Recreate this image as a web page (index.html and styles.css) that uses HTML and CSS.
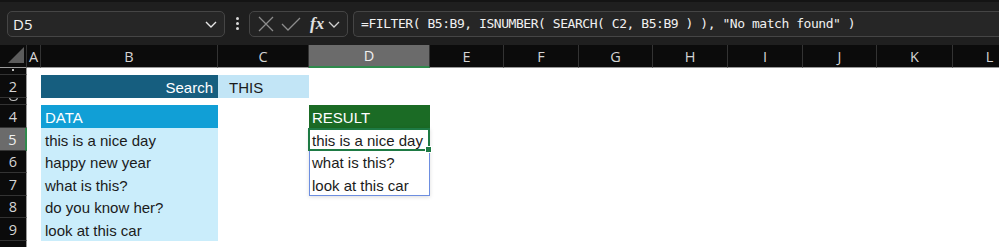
FILE: index.html
```html
<!DOCTYPE html>
<html lang="en">
<head>
    <meta charset="UTF-8">
    <title>FILTER search</title>
    <link rel="stylesheet" href="styles.css">
</head>
<body>
    <div class="toolbar">
        <div class="namebox">
            <span>D5</span>
            <svg class="chev" width="14" height="10" viewBox="0 0 14 10"><path d="M2 3 L7 8 L12 3" fill="none" stroke="#e6e6e6" stroke-width="1.4"/></svg>
        </div>
        <div class="dots"><i></i><i></i><i></i></div>
        <div class="fxbox">
            <svg width="20" height="20" viewBox="0 0 20 20"><path d="M3 3 L17 17 M17 3 L3 17" stroke="#8c8c8c" stroke-width="1.3" fill="none"/></svg>
            <svg width="22" height="20" viewBox="0 0 22 20"><path d="M2 10 L8 16 L20 4" stroke="#8c8c8c" stroke-width="1.3" fill="none"/></svg>
            <span class="fx">fx</span>
            <svg width="12" height="10" viewBox="0 0 12 10"><path d="M1 3 L6 8 L11 3" fill="none" stroke="#d0d0d0" stroke-width="1.3"/></svg>
        </div>
        <div class="formula">=FILTER( B5:B9, ISNUMBER( SEARCH( C2, B5:B9 ) ), "No match found" )</div>
    </div>

    <div class="sheet">
        <div class="hd corner"><svg width="16" height="16" viewBox="0 0 16 16"><path d="M16 0 L16 16 L0 16 Z" fill="#5c5c5c"/></svg></div>
        <div class="hd">A</div>
        <div class="hd">B</div>
        <div class="hd">C</div>
        <div class="hd sel">D</div>
        <div class="hd">E</div>
        <div class="hd">F</div>
        <div class="hd">G</div>
        <div class="hd">H</div>
        <div class="hd">I</div>
        <div class="hd">J</div>
        <div class="hd">K</div>
        <div class="hd">L</div>

        <div class="rh tiny r1"></div>
        <div class="rh r2">2</div>
        <div class="rh tiny r3"></div>
        <div class="rh r4">4</div>
        <div class="rh sel r5">5</div>
        <div class="rh r6">6</div>
        <div class="rh r7">7</div>
        <div class="rh r8">8</div>
        <div class="rh r9">9</div>
        <div class="rh r10"></div>

        <div class="cell search cb r2">Search</div>
        <div class="cell term cc r2">THIS</div>

        <div class="cell data-head cb r4">DATA</div>
        <div class="cell data cb r5">this is a nice day</div>
        <div class="cell data cb r6">happy new year</div>
        <div class="cell data cb r7">what is this?</div>
        <div class="cell data cb r8">do you know her?</div>
        <div class="cell data cb r9">look at this car</div>

        <div class="cell result-head cd r4">RESULT</div>
        <div class="spill cd"></div>
        <div class="cell res cd r5">this is a nice day</div>
        <div class="cell res cd r6">what is this?</div>
        <div class="cell res cd r7">look at this car</div>
        <div class="active cd r5"><span class="handle"></span></div>
    </div>
</body>
</html>
```

FILE: styles.css
```css
body {
    margin: 0;
    background-color: #ffffff;
    font-family: "Liberation Sans", Arial, sans-serif;
    overflow: hidden;
}
.toolbar {
    height: 45px;
    box-sizing: border-box;
    background-color: #1f1f1f;
    border-top: 2px solid #141414;
    display: flex;
    align-items: center;
    padding: 0 0 0 7px;
}
.namebox {
    width: 218px;
    height: 26px;
    box-sizing: border-box;
    background-color: #262626;
    border: 1px solid #454545;
    border-radius: 5px;
    display: flex;
    align-items: center;
    justify-content: space-between;
    padding: 0 6px 0 5px;
    color: #f2f2f2;
    font-family: "Open Sans", sans-serif;
    font-size: 15px;
}
.dots {
    width: 24px;
    display: flex;
    flex-direction: column;
    align-items: center;
    gap: 2px;
}
.dots i {
    width: 3px;
    height: 3px;
    border-radius: 50%;
    background-color: #d8d8d8;
}
.fxbox {
    width: 99px;
    height: 26px;
    box-sizing: border-box;
    border: 1px solid #454545;
    border-radius: 5px;
    background-color: #232323;
    display: flex;
    align-items: center;
    padding: 0 0 0 6px;
    gap: 4px;
}
.fx {
    font-family: "Liberation Serif", serif;
    font-style: italic;
    font-weight: bold;
    font-size: 17px;
    color: #e0e0e0;
    margin-left: 4px;
}
.formula {
    margin-left: 5px;
    flex: 1;
    height: 26px;
    box-sizing: border-box;
    border: 1px solid #454545;
    border-right: none;
    border-radius: 5px 0 0 5px;
    background-color: #262626;
    color: #f0f0f0;
    font-family: "DejaVu Sans Mono", monospace;
    font-size: 13px;
    letter-spacing: -0.45px;
    padding: 0 0 0 7px;
    display: flex;
    align-items: center;
    white-space: pre;
}
.sheet {
    display: grid;
    grid-template-columns: 27px 14px 177px 91px 121px 74px 75px 74px 75px 75px 74px 76px 74px;
    grid-template-rows: 23px 7px 23px 7px 23px 23px 22px 23px 22px 23px 23px;
}
.hd {
    grid-row: 1;
    background-color: #0b0b0b;
    border-right: 1px solid #333333;
    border-bottom: 1px solid #9a9a9a;
    color: #d4d4d4;
    font-family: "Open Sans", sans-serif;
    font-size: 14.5px;
    display: flex;
    align-items: center;
    justify-content: center;
    box-sizing: border-box;
}
.hd.corner {
    justify-content: flex-end;
    align-items: flex-end;
    padding: 0 2px 4px 0;
}
.hd.sel {
    background-color: #6b6b6b;
    border-bottom: 2px solid #2f8a4c;
    color: #f0f0f0;
}
.rh {
    grid-column: 1;
    background-color: #0b0b0b;
    border-bottom: 1px solid #333333;
    border-right: 1px solid #9a9a9a;
    color: #d4d4d4;
    font-family: "Open Sans", sans-serif;
    font-size: 14.5px;
    display: flex;
    align-items: center;
    justify-content: center;
    box-sizing: border-box;
    overflow: hidden;
}
.rh.tiny {
    justify-content: center;
}
.rh.tiny.r1::before {
    content: "";
    width: 2px;
    height: 2px;
    margin-bottom: 3px;
    background-color: #bdbdbd;
}
.rh.tiny.r3::before {
    content: "";
    width: 7px;
    height: 3px;
    margin-top: -4px;
    border: 1.5px solid #bdbdbd;
    border-top: none;
    border-radius: 0 0 5px 5px;
}
.rh.sel {
    background-color: #6b6b6b;
    border-right: 2px solid #2f8a4c;
    color: #f0f0f0;
}
.r1 { grid-row: 2; }
.r2 { grid-row: 3; }
.r3 { grid-row: 4; }
.r4 { grid-row: 5; }
.r5 { grid-row: 6; }
.r6 { grid-row: 7; }
.r7 { grid-row: 8; }
.r8 { grid-row: 9; }
.r9 { grid-row: 10; }
.r10 { grid-row: 11; }
.cb { grid-column: 3; }
.cc { grid-column: 4; }
.cd { grid-column: 5; }

.cell {
    font-size: 15px;
    color: #1b1b1b;
    display: flex;
    align-items: center;
    white-space: nowrap;
    padding: 1px 0 0 4px;
}
.search {
    background-color: #165e7f;
    color: #ffffff;
    justify-content: flex-end;
    padding-right: 5px;
}
.term {
    background-color: #c2e5f6;
    padding-left: 11px;
}
.data-head {
    background-color: #119fd6;
    color: #ffffff;
}
.data {
    background-color: #caedfb;
}
.result-head {
    background-color: #1b6b25;
    color: #ffffff;
    padding-left: 3px;
}
.res {
    padding-left: 3px;
}
.spill {
    grid-row: 6 / 9;
    border: 1px solid #6d8ee0;
    box-shadow: 0 1px 4px rgba(0, 0, 0, 0.14);
}
.active {
    border: 2px solid #1e7a44;
    position: relative;
    margin: 0 0 0 -1px;
}
.handle {
    position: absolute;
    right: -4px;
    bottom: -4px;
    width: 5px;
    height: 5px;
    background-color: #1e7a44;
    border: 1px solid #ffffff;
}
```
